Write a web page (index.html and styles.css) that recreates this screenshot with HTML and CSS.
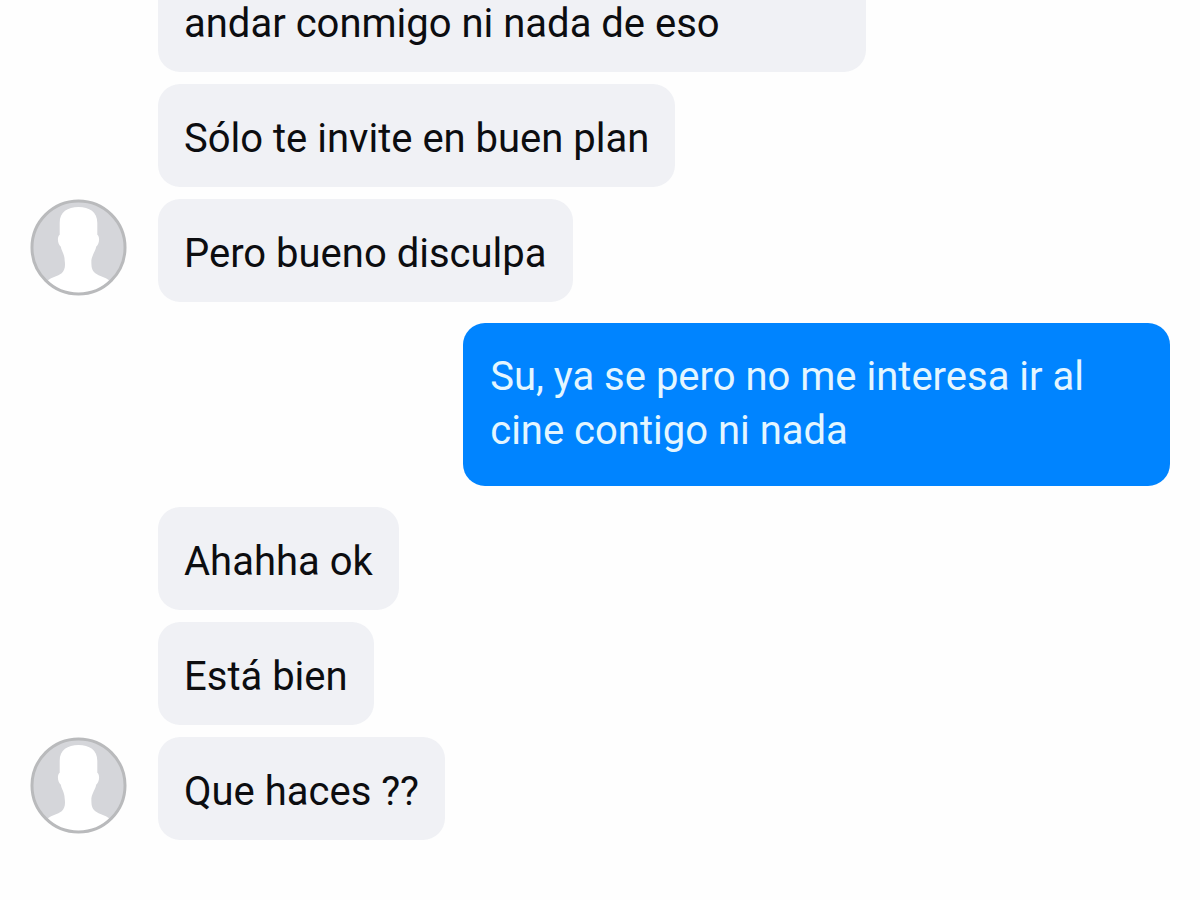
FILE: index.html
```html
<!DOCTYPE html>
<html lang="es">
<head>
    <meta charset="UTF-8">
    <meta name="viewport" content="width=device-width, initial-scale=1.0">
    <title>Chat</title>
    <link rel="stylesheet" href="styles.css">
</head>
<body>
    <!-- Avatar shared by all received groups -->
    <svg class="defs" width="0" height="0" aria-hidden="true">
        <symbol id="avatar" viewBox="0 0 98 98">
            <circle cx="49" cy="49" r="47" fill="#d5d6da"/>
            <path d="M49 8 C38 8 30 13 30 24 L30 36 C27 38 28 46 31 48 C32 53 35 56 35 62 C36 68 35 72 32 75 C28 78 22 79 18 82 Q30 97 49 97 Q68 97 80 82 C76 79 70 78 66 75 C62 72 62 68 62 62 C63 56 66 53 67 48 C70 46 71 38 68 36 L68 24 C68 13 60 8 49 8 Z" fill="#fff"/>
            <circle cx="49" cy="49" r="47" fill="none" stroke="#b9babc" stroke-width="3"/>
        </symbol>
    </svg>

    <main class="thread">
        <div class="group received">
            <div class="row">
                <p class="bubble wide">andar conmigo ni nada de eso</p>
            </div>
            <div class="row">
                <p class="bubble">Sólo te invite en buen plan</p>
            </div>
            <div class="row">
                <svg class="avatar" role="img" aria-label="Contacto"><use href="#avatar"/></svg>
                <p class="bubble">Pero bueno disculpa</p>
            </div>
        </div>

        <div class="group sent">
            <p class="bubble">Su, ya se pero no me interesa ir al cine contigo ni nada</p>
        </div>

        <div class="group received">
            <div class="row">
                <p class="bubble">Ahahha ok</p>
            </div>
            <div class="row">
                <p class="bubble">Está bien</p>
            </div>
            <div class="row">
                <svg class="avatar" role="img" aria-label="Contacto"><use href="#avatar"/></svg>
                <p class="bubble">Que haces ??</p>
            </div>
        </div>
    </main>
</body>
</html>
```
FILE: styles.css
```css
/* General styling */
* {
    box-sizing: border-box;
}

body {
    margin: 0;
    background-color: #fefefe;
    font-family: Roboto, sans-serif;
    font-size: 40px;
    line-height: 54px;
    color: #0c0d10;
    overflow: hidden;
}

.defs {
    position: absolute;
}

/* Thread is scrolled down, so the first bubble is partly cut off */
.thread {
    display: flex;
    flex-direction: column;
    gap: 21px;
    margin-top: -31px;
    padding: 0 30px;
}

.group {
    display: flex;
    flex-direction: column;
    gap: 12px;
}

/* Bubbles */
.bubble {
    margin: 0;
    padding: 28px 26px 21px;
    border-radius: 22px;
}

.wide {
    width: 70%;
}

/* Received messages */
.row {
    display: flex;
    align-items: flex-start;
    gap: 31px;
    padding-left: 128px;
}

.row:has(.avatar) {
    padding-left: 0;
}

.received .bubble {
    background-color: #f0f1f5;
}

.avatar {
    width: 97px;
    height: 97px;
    flex-shrink: 0;
}

/* Sent messages */
.sent {
    align-items: flex-end;
}

.sent .bubble {
    width: 62%;
    padding: 27px 27px 28px;
    background-color: #0084ff;
    color: #e4f6ff;
}
```
